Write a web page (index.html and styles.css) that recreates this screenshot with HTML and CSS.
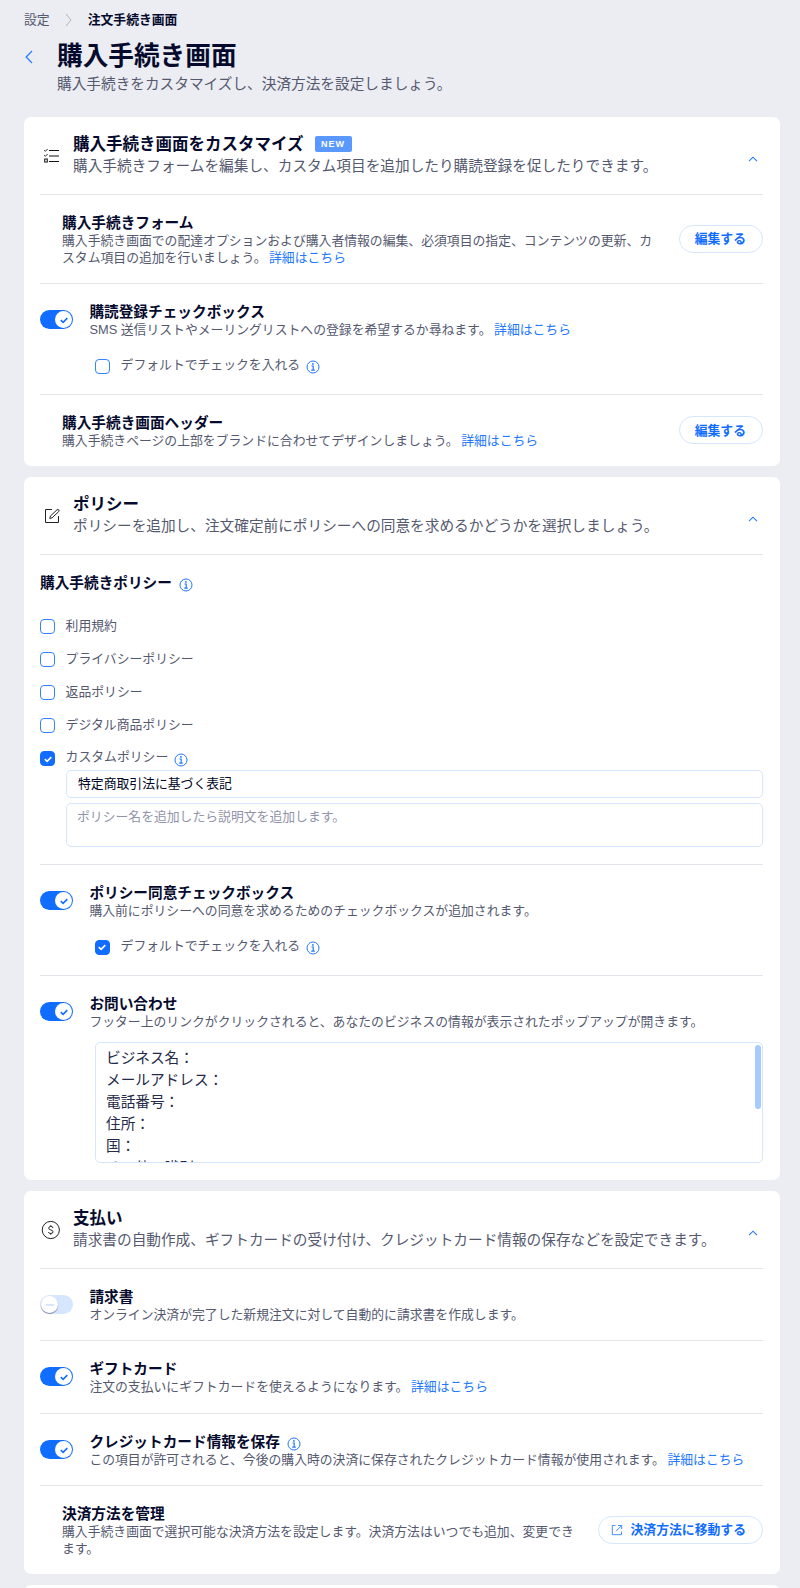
FILE: index.html
```html
<!DOCTYPE html>
<html lang="ja">
<head>
    <meta charset="UTF-8">
    <meta name="viewport" content="width=device-width, initial-scale=1.0">
    <title>購入手続き画面</title>
    <link rel="stylesheet" href="styles.css">
</head>
<body>
    <!-- Shared icons -->
    <svg class="sprite" width="0" height="0">
        <symbol id="info" viewBox="0 0 14 14">
            <circle cx="7" cy="7" r="6" fill="none" stroke="currentColor"/>
            <path d="M5.5 6h1.7v4M5.2 10.1h3.6" fill="none" stroke="currentColor" stroke-width="1.2"/>
            <circle cx="6.9" cy="3.9" r=".9" fill="currentColor"/>
        </symbol>
        <symbol id="check" viewBox="0 0 10 10">
            <path d="M1.8 5.1L4.1 7.3L8.3 3.1" fill="none" stroke="currentColor" stroke-width="1.6"/>
        </symbol>
        <symbol id="up" viewBox="0 0 10 6">
            <path d="M1 5.2L5 1.2L9 5.2" fill="none" stroke="currentColor" stroke-width="1.1"/>
        </symbol>
    </svg>

    <header class="page-header">
        <nav class="breadcrumb">
            <span>設定</span>
            <svg width="7" height="14" viewBox="0 0 7 14"><path d="M1 1L6 7L1 13" fill="none" stroke="#b3b5c2"/></svg>
            <strong>注文手続き画面</strong>
        </nav>
        <div class="page-title">
            <svg class="back" width="9" height="14" viewBox="0 0 9 14"><path d="M8 1L2.2 7L8 13" fill="none" stroke="#3382ff" stroke-width="1.4"/></svg>
            <div>
                <h1>購入手続き画面</h1>
                <p>購入手続きをカスタマイズし、決済方法を設定しましょう。</p>
            </div>
        </div>
    </header>

    <main>
        <section class="card">
            <div class="card-header">
                <svg class="card-icon" width="24" height="20" viewBox="0 0 24 20" fill="none" stroke="#111">
                    <path d="M9 4.5h10M9 10h10M9 15.5h10"/>
                    <path d="M4.2 4.2l1.2 1.1l2.2-2.3M4.2 9.2l1.2 1.1l2.2-2.3" stroke-width=".9"/>
                    <rect x="4.7" y="13" width="2.6" height="3"/>
                </svg>
                <div class="card-text">
                    <h2>購入手続き画面をカスタマイズ <span class="badge">NEW</span></h2>
                    <p>購入手続きフォームを編集し、カスタム項目を追加したり購読登録を促したりできます。</p>
                </div>
                <svg class="toggle-arrow"><use href="#up"/></svg>
            </div>
            <div class="row row-double">
                <div class="row-text">
                    <h3>購入手続きフォーム</h3>
                    <p>購入手続き画面での配達オプションおよび購入者情報の編集、必須項目の指定、コンテンツの更新、カスタム項目の追加を行いましょう。 <a>詳細はこちら</a></p>
                </div>
                <button class="btn">編集する</button>
            </div>
            <div class="row row-check">
                <span class="switch on"><i><svg><use href="#check"/></svg></i></span>
                <div class="row-text">
                    <h3>購読登録チェックボックス</h3>
                    <p>SMS 送信リストやメーリングリストへの登録を希望するか尋ねます。 <a>詳細はこちら</a></p>
                    <label class="sub-check"><span class="box"></span><span class="label">デフォルトでチェックを入れる</span><svg class="info"><use href="#info"/></svg></label>
                </div>
            </div>
            <div class="row row-last">
                <div class="row-text">
                    <h3>購入手続き画面ヘッダー</h3>
                    <p>購入手続きページの上部をブランドに合わせてデザインしましょう。 <a>詳細はこちら</a></p>
                </div>
                <button class="btn">編集する</button>
            </div>
        </section>

        <section class="card">
            <div class="card-header">
                <svg class="card-icon" width="24" height="20" viewBox="0 0 24 20" fill="none" stroke="#222">
                    <path d="M12 3.5H5.5v13h13V10"/>
                    <path d="M9.8 12.4l.6-2.4l6.6-6.2q1-.7 1.8.1q.7.9-.1 1.7l-6.6 6.2z"/>
                </svg>
                <div class="card-text">
                    <h2>ポリシー</h2>
                    <p>ポリシーを追加し、注文確定前にポリシーへの同意を求めるかどうかを選択しましょう。</p>
                </div>
                <svg class="toggle-arrow"><use href="#up"/></svg>
            </div>
            <div class="policies">
                <h3>購入手続きポリシー <svg class="info"><use href="#info"/></svg></h3>
                <ul>
                    <li><span class="box"></span><span class="label">利用規約</span></li>
                    <li><span class="box"></span><span class="label">プライバシーポリシー</span></li>
                    <li><span class="box"></span><span class="label">返品ポリシー</span></li>
                    <li><span class="box"></span><span class="label">デジタル商品ポリシー</span></li>
                    <li><span class="box checked"><svg><use href="#check"/></svg></span><span class="label">カスタムポリシー</span><svg class="info"><use href="#info"/></svg></li>
                </ul>
                <div class="field">特定商取引法に基づく表記</div>
                <div class="field area">ポリシー名を追加したら説明文を追加します。</div>
            </div>
            <div class="row row-check">
                <span class="switch on"><i><svg><use href="#check"/></svg></i></span>
                <div class="row-text">
                    <h3>ポリシー同意チェックボックス</h3>
                    <p>購入前にポリシーへの同意を求めるためのチェックボックスが追加されます。</p>
                    <label class="sub-check"><span class="box checked"><svg><use href="#check"/></svg></span><span class="label">デフォルトでチェックを入れる</span><svg class="info"><use href="#info"/></svg></label>
                </div>
            </div>
            <div class="row row-contact">
                <span class="switch on"><i><svg><use href="#check"/></svg></i></span>
                <div class="row-text">
                    <h3>お問い合わせ</h3>
                    <p>フッター上のリンクがクリックされると、あなたのビジネスの情報が表示されたポップアップが開きます。</p>
                    <div class="contact-box">
                        <div class="contact-lines">
                            <div>ビジネス名：</div>
                            <div>メールアドレス：</div>
                            <div>電話番号：</div>
                            <div>住所：</div>
                            <div>国：</div>
                            <div>その他の識別：</div>
                        </div>
                        <span class="scrollbar"></span>
                    </div>
                </div>
            </div>
        </section>

        <section class="card">
            <div class="card-header">
                <svg class="card-icon" width="24" height="20" viewBox="0 0 24 20" fill="none" stroke="#222">
                    <circle cx="10.8" cy="10" r="8.6"/>
                    <path d="M13 8q-.2-1.6-2.2-1.6T8.7 8.1q0 1.4 2.1 1.8t2.2 1.9q0 1.7-2.2 1.7T8.5 12M10.8 5.2v1.2M10.8 13.5v1.3"/>
                </svg>
                <div class="card-text">
                    <h2>支払い</h2>
                    <p>請求書の自動作成、ギフトカードの受け付け、クレジットカード情報の保存などを設定できます。</p>
                </div>
                <svg class="toggle-arrow"><use href="#up"/></svg>
            </div>
            <div class="row">
                <span class="switch"><i></i></span>
                <div class="row-text">
                    <h3>請求書</h3>
                    <p>オンライン決済が完了した新規注文に対して自動的に請求書を作成します。</p>
                </div>
            </div>
            <div class="row row-gift">
                <span class="switch on"><i><svg><use href="#check"/></svg></i></span>
                <div class="row-text">
                    <h3>ギフトカード</h3>
                    <p>注文の支払いにギフトカードを使えるようになります。 <a>詳細はこちら</a></p>
                </div>
            </div>
            <div class="row">
                <span class="switch on"><i><svg><use href="#check"/></svg></i></span>
                <div class="row-text">
                    <h3>クレジットカード情報を保存 <svg class="info"><use href="#info"/></svg></h3>
                    <p>この項目が許可されると、今後の購入時の決済に保存されたクレジットカード情報が使用されます。 <a>詳細はこちら</a></p>
                </div>
            </div>
            <div class="row row-manage">
                <div class="row-text">
                    <h3>決済方法を管理</h3>
                    <p>購入手続き画面で選択可能な決済方法を設定します。決済方法はいつでも追加、変更できます。</p>
                </div>
                <button class="btn btn-link">
                    <svg width="12" height="12" viewBox="0 0 12 12" fill="none" stroke="#3382ff" stroke-width=".9"><path d="M4.5 1.5H1.3v9.2h9.2V7.5M7 1.5h3.7v3.7M10.5 1.7L5 7.2"/></svg>
                    決済方法に移動する
                </button>
            </div>
        </section>

        <section class="card card-next"></section>
    </main>
</body>
</html>
```
FILE: styles.css
```css
* {
    box-sizing: border-box;
}

body, h1, h2, h3, p, ul {
    margin: 0;
    padding: 0;
}

body {
    height: 1588px;
    overflow: hidden;
    background-color: #ecedf2;
    color: #55596f;
    font-family: "Liberation Sans", "Noto Sans CJK JP", sans-serif;
    font-size: 12.83px;
    line-height: 16.5px;
}

h1, h2, h3, strong {
    color: #060b2e;
    font-weight: bold;
}

a {
    margin-left: -1px;
    color: #2478ff;
}

.sprite {
    display: block;
}

/* Page header */
.page-header {
    height: 117px;
    padding: 10px 24px 0;
}

.breadcrumb {
    display: flex;
    align-items: center;
    height: 20px;
}

.breadcrumb svg {
    margin: 0 16px 0 15px;
}

.page-title {
    display: flex;
    padding-top: 10px;
}

.page-title .back {
    margin: 10px 24px 0 0;
}

h1 {
    font-size: 25.67px;
    line-height: 33px;
}

.page-title p {
    font-size: 14.67px;
    line-height: 22px;
}

/* Cards */
.card {
    margin: 0 20px 11px 24px;
    padding: 0 17px 0 16px;
    background-color: #fff;
    border-radius: 7px;
}

.card-next {
    height: 20px;
}

.card-header {
    display: flex;
    height: 78px;
    padding-top: 16px;
    border-bottom: 1px solid #e3e5ea;
}

.card-icon {
    flex: none;
    margin: 12.5px 9px 0 0;
}

.card-text {
    flex: 1;
}

h2 {
    display: flex;
    align-items: center;
    font-size: 16.5px;
    line-height: 22px;
}

.card-text p {
    font-size: 14.67px;
    line-height: 23px;
}

.badge {
    width: 37px;
    height: 16px;
    margin-left: 11px;
    border-radius: 2px;
    background-color: #5999ff;
    color: #fff;
    font-size: 9px;
    line-height: 16px;
    letter-spacing: 1px;
    text-align: center;
}

.toggle-arrow {
    width: 10px;
    height: 6px;
    margin: 22.5px 5px 0 0;
    color: #2478ff;
}

/* Rows */
.row {
    display: flex;
    height: 72px;
    padding-top: 17px;
    border-bottom: 1px solid #e3e5ea;
}

.row:last-child {
    border-bottom: none;
}

.row-double {
    height: 89px;
}

.row-check {
    height: 111px;
}

.row-last {
    height: 71px;
}

.row-contact {
    height: 204px;
}

.row-gift {
    height: 73px;
}

.row-manage {
    height: 88px;
}

.row-text {
    flex: 1;
    padding-left: 22px;
}

.switch + .row-text {
    padding-left: 16.4px;
}

h3 {
    display: flex;
    align-items: center;
    margin-bottom: -1px;
    padding-top: 1px;
    font-size: 14.67px;
    line-height: 21px;
}

h3 .info {
    margin: 2px 0 0 7px;
}

.info {
    flex: none;
    width: 14px;
    height: 14px;
    color: #2478ff;
}

.label + .info {
    margin: 2px 0 0 6px;
}

.btn {
    align-self: center;
    height: 28px;
    margin: -18px 0 0 17px;
    padding: 0 16px 2px 14.6px;
    border: 1px solid #d6e6fe;
    border-radius: 14px;
    background-color: #fff;
    color: #116dff;
    font-family: inherit;
    font-size: 12.83px;
    font-weight: bold;
    white-space: nowrap;
}

.btn-link {
    display: flex;
    align-items: center;
    padding-left: 12px;
}

.btn-link svg {
    margin: 2px 8px 0 0;
}

/* Switch */
.switch {
    flex: none;
    display: flex;
    width: 33px;
    height: 19px;
    margin-top: 9px;
    border-radius: 10px;
    background-color: #d6e6fe;
}

.switch i {
    display: flex;
    align-items: center;
    justify-content: center;
    width: 17px;
    height: 17px;
    margin: 1px;
    border-radius: 50%;
    background-color: #fff;
    box-shadow: 0 1px 1px rgba(0, 6, 36, 0.4);
}

.switch i::before {
    content: "";
    width: 8px;
    height: 2px;
    background-color: #d6e6fe;
}

.switch.on {
    justify-content: flex-end;
    background-color: #116dff;
}

.switch.on i {
    box-shadow: none;
}

.switch.on i::before {
    display: none;
}

.switch svg, .box svg {
    width: 10px;
    height: 10px;
}

.switch svg {
    color: #116dff;
}

/* Checkboxes */
.box {
    flex: none;
    display: flex;
    align-items: center;
    justify-content: center;
    width: 15px;
    height: 15px;
    margin-right: 10.6px;
    border: 1px solid #3382ff;
    border-radius: 4px;
    color: #fff;
}

.box.checked {
    border-color: #116dff;
    background-color: #116dff;
}

.sub-check {
    display: flex;
    align-items: center;
    height: 17px;
    margin: 19px 0 0 5.6px;
}

.sub-check .label {
    margin-top: -2px;
}

/* Policies */
.policies {
    height: 310px;
    padding-top: 17px;
    border-bottom: 1px solid #e3e5ea;
}

.policies ul {
    height: 177px;
    padding-top: 17px;
    list-style: none;
}

.policies li {
    display: flex;
    align-items: center;
    height: 33px;
}

.policies li:last-child .label {
    margin-top: -2px;
}

.field {
    height: 28px;
    margin-left: 26px;
    padding-left: 11px;
    border: 1px solid #d6e6fe;
    border-radius: 5px;
    color: #000624;
    line-height: 26px;
}

.area {
    height: 44px;
    margin-top: 5px;
    padding-left: 10px;
    color: #9194a8;
}

.contact-box {
    display: flex;
    justify-content: space-between;
    height: 121px;
    margin: 11px 0 0 5.6px;
    padding: 2px 1px 0 10px;
    overflow: hidden;
    border: 1px solid #d6e6fe;
    border-radius: 5px;
    color: #252a48;
    font-size: 14.67px;
    line-height: 22px;
}

.contact-lines {
    padding-top: 2px;
}

.scrollbar {
    width: 6px;
    height: 64px;
    border-radius: 3px;
    background-color: #a8caff;
}
```
